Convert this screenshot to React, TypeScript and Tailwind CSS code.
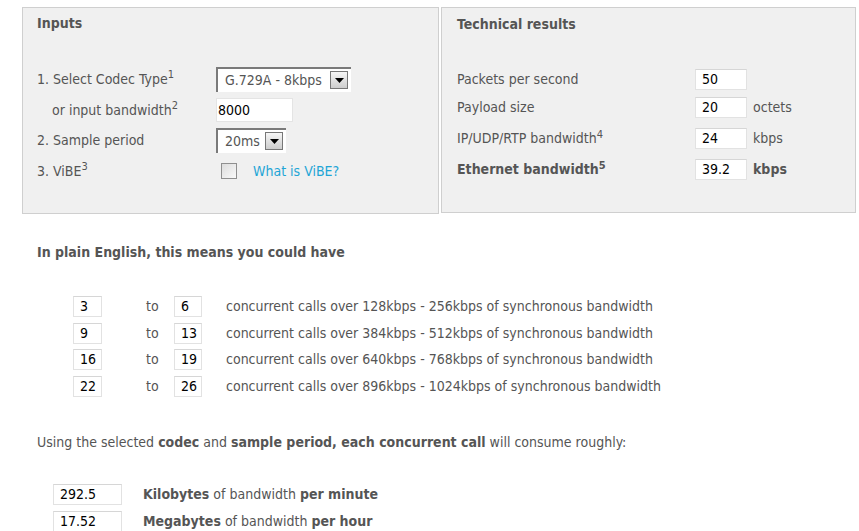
import React from 'react';

const font = { fontFamily: '"DejaVu Sans Condensed", "DejaVu Sans", Verdana, sans-serif' };

function Box({ value, w }: { value: string; w: string }) {
  return (
    <div
      className={`${w} h-[21px] bg-white border border-[#e2e2e2] border-t-[#d6d6d6] text-black text-[14px] leading-[19px] pl-[6px]`}
    >
      {value}
    </div>
  );
}

function Select({ value, w }: { value: string; w: string }) {
  return (
    <div
      className={`${w} h-[25px] bg-white border-t-2 border-l-2 border-[#7a7a7a] flex items-center justify-between pl-[7px] pr-[3px] text-[14px] text-[#555]`}
    >
      <span>{value}</span>
      <span className="w-[18px] h-[18px] border border-[#777] bg-gradient-to-b from-[#f6f6f6] to-[#cdcdcd] flex items-center justify-center">
        <svg width="9" height="5" viewBox="0 0 9 5">
          <path d="M0 0h9L4.5 5z" fill="#000" />
        </svg>
      </span>
    </div>
  );
}

export default function App() {
  const calls = [
    ['3', '6', '128kbps - 256kbps'],
    ['9', '13', '384kbps - 512kbps'],
    ['16', '19', '640kbps - 768kbps'],
    ['22', '26', '896kbps - 1024kbps'],
  ];

  return (
    <div className="w-[859px] h-[531px] bg-white text-[#555] text-[14px] overflow-hidden" style={font}>
      <div className="flex pt-[7px] pl-[22px] gap-[2px]">
        {/* Inputs */}
        <div className="w-[417px] h-[207px] bg-[#f0f0f0] border border-[#cfcfcf] pl-[14px] pt-[5px]">
          <div className="font-bold h-[18px]">Inputs</div>
          <div className="mt-[35px] flex flex-col">
            <div className="flex items-center h-[26px]">
              <div className="w-[179px]">
                1. Select Codec Type<sup className="text-[11px]">1</sup>
              </div>
              <Select value="G.729A - 8kbps" w="w-[135px]" />
            </div>
            <div className="flex items-center h-[24px] mt-[6px]">
              <div className="w-[179px] pl-[15px]">
                or input bandwidth<sup className="text-[11px]">2</sup>
              </div>
              <div className="w-[77px] h-[24px] bg-white border border-[#e4e4e4] text-black text-[14px] leading-[22px] pl-[1px]">
                8000
              </div>
            </div>
            <div className="flex items-center h-[26px] mt-[5px]">
              <div className="w-[179px]">2. Sample period</div>
              <Select value="20ms" w="w-[70px]" />
            </div>
            <div className="flex items-center h-[24px] mt-[6px]">
              <div className="w-[184px]">
                3. ViBE<sup className="text-[11px]">3</sup>
              </div>
              <span className="w-[16px] h-[16px] border border-[#8f8f8f] bg-gradient-to-br from-[#dcdcdc] to-[#fafafa]" />
              <a className="ml-[16px] text-[#1ea5d6]">What is ViBE?</a>
            </div>
          </div>
        </div>

        {/* Technical results */}
        <div className="w-[415px] h-[206px] bg-[#f0f0f0] border border-[#cfcfcf] pl-[15px] pt-[6px]">
          <div className="font-bold h-[18px]">Technical results</div>
          <div className="mt-[37px] flex flex-col gap-[7px]">
            <div className="flex items-center h-[21px]">
              <div className="w-[238px]">Packets per second</div>
              <Box value="50" w="w-[52px]" />
            </div>
            <div className="flex items-center h-[21px]">
              <div className="w-[238px]">Payload size</div>
              <Box value="20" w="w-[52px]" />
              <span className="ml-[6px]">octets</span>
            </div>
            <div className="flex items-center h-[21px] mt-[3px]">
              <div className="w-[238px]">
                IP/UDP/RTP bandwidth<sup className="text-[11px]">4</sup>
              </div>
              <Box value="24" w="w-[52px]" />
              <span className="ml-[6px]">kbps</span>
            </div>
            <div className="flex items-center h-[21px] mt-[3px]">
              <div className="w-[238px] font-bold">
                Ethernet bandwidth<sup className="text-[11px]">5</sup>
              </div>
              <Box value="39.2" w="w-[52px]" />
              <span className="ml-[6px] font-bold">kbps</span>
            </div>
          </div>
        </div>
      </div>

      <div className="pl-[37px] mt-[28px] font-bold">In plain English, this means you could have</div>

      <div className="pl-[73px] mt-[33px] flex flex-col gap-[5.7px]">
        {calls.map(([a, b, range]) => (
          <div key={a} className="flex items-center h-[21px]">
            <Box value={a} w="w-[29px]" />
            <span className="ml-[44px] w-[28px]">to</span>
            <Box value={b} w="w-[28px]" />
            <span className="ml-[24px]">concurrent calls over {range} of synchronous bandwidth</span>
          </div>
        ))}
      </div>

      <div className="pl-[37px] mt-[35px]">
        Using the selected <b>codec</b> and <b>sample period, each concurrent call</b> will consume roughly:
      </div>

      <div className="pl-[53px] mt-[31px] flex flex-col gap-[6px]">
        <div className="flex items-center h-[21px]">
          <Box value="292.5" w="w-[69px]" />
          <span className="ml-[21px]">
            <b>Kilobytes</b> of bandwidth <b>per minute</b>
          </span>
        </div>
        <div className="flex items-center h-[21px]">
          <Box value="17.52" w="w-[69px]" />
          <span className="ml-[21px]">
            <b>Megabytes</b> of bandwidth <b>per hour</b>
          </span>
        </div>
      </div>
    </div>
  );
}
